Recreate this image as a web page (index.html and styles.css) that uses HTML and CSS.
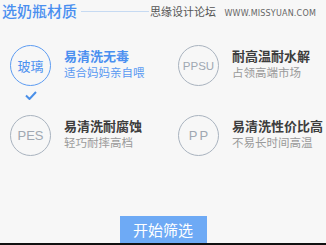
FILE: index.html
```html
<!DOCTYPE html>
<html lang="zh">
<head>
<meta charset="utf-8">
<link rel="stylesheet" href="styles.css">
</head>
<body>
<div class="page">
  <div class="header">
    <span class="title">选奶瓶材质</span>
    <span class="rule"></span>
    <span class="wm">思缘设计论坛 <span class="wm-en">WWW.MISSYUAN.COM</span></span>
  </div>
  <div class="grid">
    <div class="item active">
      <div class="icon-col">
        <div class="circle cn">玻璃</div>
        <svg class="check" width="12" height="9" viewBox="0 0 12 9"><path d="M1 4.5 L4.5 8 L11 1" fill="none" stroke="#4a8fe8" stroke-width="2"/></svg>
      </div>
      <div class="text">
        <div class="name">易清洗无毒</div>
        <div class="desc">适合妈妈亲自喂</div>
      </div>
    </div>
    <div class="item">
      <div class="icon-col">
        <div class="circle small">PPSU</div>
      </div>
      <div class="text">
        <div class="name">耐高温耐水解</div>
        <div class="desc">占领高端市场</div>
      </div>
    </div>
    <div class="item">
      <div class="icon-col">
        <div class="circle">PES</div>
      </div>
      <div class="text">
        <div class="name">易清洗耐腐蚀</div>
        <div class="desc">轻巧耐摔高档</div>
      </div>
    </div>
    <div class="item">
      <div class="icon-col">
        <div class="circle wide">PP</div>
      </div>
      <div class="text">
        <div class="name">易清洗性价比高</div>
        <div class="desc">不易长时间高温</div>
      </div>
    </div>
  </div>
  <div class="actions">
    <button class="btn">开始筛选</button>
  </div>
  <div class="bottom-bar"></div>
</div>
</body>
</html>
```
FILE: styles.css
```css
html, body {
  margin: 0;
  padding: 0;
  background: #f7f7f7;
}
.page {
  width: 326px;
  height: 245px;
  overflow: hidden;
  font-family: "Noto Sans CJK SC", "Noto Sans", sans-serif;
  display: flex;
  flex-direction: column;
}
.header {
  display: flex;
  align-items: center;
  height: 22px;
  padding-left: 2px;
}
.title {
  font-size: 15px;
  line-height: 22px;
  color: #4a8ff0;
  font-weight: 500;
}
.rule {
  flex: 1;
  height: 1px;
  background: #c6daf2;
  margin: 0 1px 0 4px;
}
.wm {
  font-size: 11px;
  color: #555;
  line-height: 22px;
  padding-top: 3px;
  white-space: nowrap;
  margin-right: 10px;
}
.wm-en {
  font-family: "DejaVu Sans", sans-serif;
  font-size: 8px;
  color: #666;
  margin-left: 6px;
  letter-spacing: 0.2px;
}
.grid {
  display: grid;
  grid-template-columns: 168px 1fr;
  grid-auto-rows: 70px;
  padding: 23px 0 0 10px;
}
.item {
  display: flex;
  gap: 13px;
}
.icon-col {
  display: flex;
  flex-direction: column;
  align-items: center;
  width: 41px;
}
.circle {
  box-sizing: border-box;
  width: 41px;
  height: 41px;
  border-radius: 50%;
  border: 1.5px solid #a9b3bf;
  display: flex;
  align-items: center;
  justify-content: center;
  font-family: "Liberation Sans", sans-serif;
  font-size: 13px;
  color: #a0a8b2;
}
.circle.small {
  font-size: 11.5px;
}
.circle.wide {
  letter-spacing: 2px;
  padding-left: 2px;
}
.circle.cn {
  font-family: "Noto Sans CJK SC", sans-serif;
  font-size: 13px;
}
.active .circle {
  border-color: #5d9cf2;
  color: #4a8ff0;
}
.check {
  margin-top: 5px;
}
.text {
  padding-top: 2px;
}
.name {
  font-size: 13px;
  line-height: 17px;
  font-weight: 700;
  color: #3d3d3d;
}
.desc {
  font-size: 11.5px;
  line-height: 17px;
  color: #9a9a9a;
}
.active .name {
  color: #4a8ff0;
}
.active .desc {
  color: #5a9af2;
}
.actions {
  display: flex;
  justify-content: center;
  margin-top: 31px;
}
.btn {
  width: 87px;
  height: 27px;
  border: none;
  padding: 0;
  background: #6eaaf5;
  color: #fff;
  font-family: "Noto Sans CJK SC", sans-serif;
  font-size: 15px;
  line-height: 27px;
}
.bottom-bar {
  height: 2px;
  background: #111;
}
```
